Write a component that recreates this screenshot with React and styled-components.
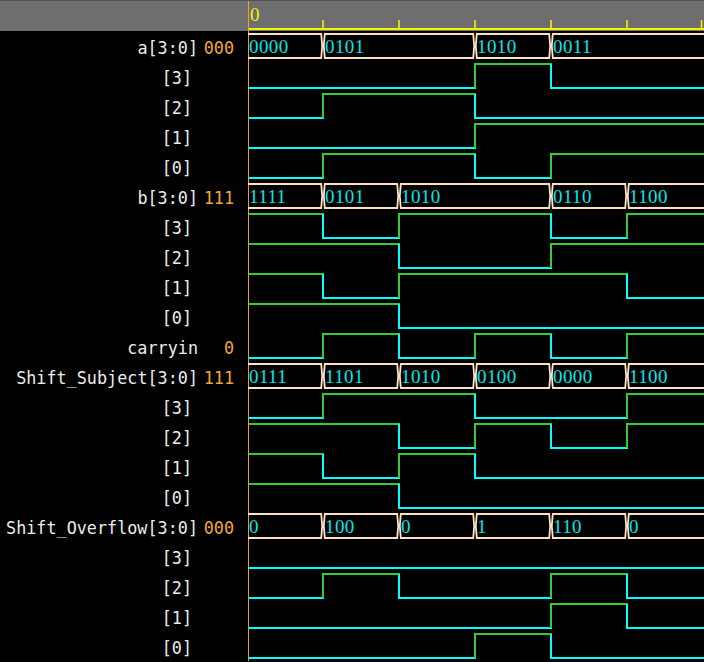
import React from "react";
import styled, { createGlobalStyle } from "styled-components";

const GlobalStyle = createGlobalStyle`
  html, body {
    margin: 0;
    padding: 0;
    background: #000000;
  }
`;

// edge positions, relative to the first pixel after the cursor line
const T = [0, 74, 150, 226, 302, 378, 460];

const HIGH = "#33cc33";
const LOW = "#00ffff";
const BUS = "#ffe2c4";
const TEXT = "#00e8e8";

const signals = [
  { name: "a[3:0]", value: "000", bus: ["0000", "0101", "0101", "1010", "0011", "0011"] },
  { name: "[3]", bits: [0, 0, 0, 1, 0, 0] },
  { name: "[2]", bits: [0, 1, 1, 0, 0, 0] },
  { name: "[1]", bits: [0, 0, 0, 1, 1, 1] },
  { name: "[0]", bits: [0, 1, 1, 0, 1, 1] },
  { name: "b[3:0]", value: "111", bus: ["1111", "0101", "1010", "1010", "0110", "1100"] },
  { name: "[3]", bits: [1, 0, 1, 1, 0, 1] },
  { name: "[2]", bits: [1, 1, 0, 0, 1, 1] },
  { name: "[1]", bits: [1, 0, 1, 1, 1, 0] },
  { name: "[0]", bits: [1, 1, 0, 0, 0, 0] },
  { name: "carryin", value: "0", bits: [0, 1, 0, 1, 0, 1] },
  { name: "Shift_Subject[3:0]", value: "111", bus: ["0111", "1101", "1010", "0100", "0000", "1100"] },
  { name: "[3]", bits: [0, 1, 1, 0, 0, 1] },
  { name: "[2]", bits: [1, 1, 0, 1, 0, 1] },
  { name: "[1]", bits: [1, 0, 1, 0, 0, 0] },
  { name: "[0]", bits: [1, 1, 0, 0, 0, 0] },
  { name: "Shift_Overflow[3:0]", value: "000", bus: ["0", "100", "0", "1", "110", "0"] },
  { name: "[3]", bits: [0, 0, 0, 0, 0, 0] },
  { name: "[2]", bits: [0, 1, 0, 0, 1, 0] },
  { name: "[1]", bits: [0, 0, 0, 0, 1, 0] },
  { name: "[0]", bits: [0, 0, 0, 1, 0, 0] },
];

const Viewer = styled.div`
  width: 704px;
  height: 662px;
  overflow: hidden;
  background: #000000;
`;

const Header = styled.div`
  display: grid;
  grid-template-columns: 248px 1fr;
  height: 30px;
  background: #6e6e6e;
  border-top: 1px solid #505050;
`;

const Ruler = styled.div`
  position: relative;
  border-left: 1px solid #e8a030;
`;

const RulerLabel = styled.span`
  position: absolute;
  left: 1px;
  top: 4px;
  font-family: "Liberation Serif", serif;
  font-size: 19px;
  line-height: 19px;
  color: #f4f400;
`;

const Row = styled.div`
  display: grid;
  grid-template-columns: 198px 36px 14px 1fr;
  height: 30px;
  align-items: center;
  font-family: "DejaVu Sans Mono", monospace;
  font-size: 16.8px;
`;

const Name = styled.div`
  padding-top: 3px;
  text-align: right;
  white-space: nowrap;
  color: #ececec;
  padding-right: ${(p) => (p.$bit ? "6px" : "0")};
`;

const Value = styled.div`
  padding-top: 3px;
  text-align: right;
  color: #f0a830;
`;

const WaveCell = styled.div`
  align-self: stretch;
  border-left: 1px solid #e8a030;
`;

const WaveSvg = styled.svg`
  display: block;
  overflow: visible;
`;

const BusText = styled.text`
  font-family: "Liberation Serif", serif;
  font-size: 19px;
  letter-spacing: 0.4px;
  fill: ${TEXT};
`;

function BitWave({ bits }) {
  const y = (v) => (v ? 3 : 27);
  const col = (v) => (v ? HIGH : LOW);
  const parts = [];
  bits.forEach((v, i) => {
    if (i > 0 && bits[i - 1] !== v) {
      parts.push(
        <line key={"e" + i} x1={T[i]} x2={T[i]} y1={y(bits[i - 1])} y2={y(v)} stroke={col(v)} strokeWidth="2" />
      );
    }
    parts.push(
      <line key={"h" + i} x1={T[i] - (i > 0 ? 1 : 0)} x2={T[i + 1] + 1} y1={y(v)} y2={y(v)} stroke={col(v)} strokeWidth="2" />
    );
  });
  return parts;
}

function BusWave({ bus }) {
  const segs = [];
  bus.forEach((v, i) => {
    const last = segs[segs.length - 1];
    if (last && last.v === v) last.x1 = T[i + 1];
    else segs.push({ v, x0: T[i], x1: T[i + 1] });
  });
  const top = 3;
  const bot = 27;
  const mid = 15;
  return segs.map((s, i) => {
    const first = i === 0;
    const lastSeg = i === segs.length - 1;
    const l = first ? `M ${s.x0 - 1} ${top}` : `M ${s.x0 + 0.8} ${mid} L ${s.x0 + 1.8} ${top}`;
    const r = lastSeg
      ? `L ${s.x1} ${top} M ${s.x1} ${bot}`
      : `L ${s.x1 - 1.8} ${top} L ${s.x1 - 0.8} ${mid} L ${s.x1 - 1.8} ${bot}`;
    const e = first ? `L ${s.x0 - 1} ${bot}` : `L ${s.x0 + 1.8} ${bot} L ${s.x0 + 0.8} ${mid}`;
    return (
      <g key={i}>
        <path d={`${l} ${r} ${e}`} fill="none" stroke={BUS} strokeWidth="1.8" />
        <BusText x={first ? 0 : s.x0 + 2} y="21.5">
          {s.v}
        </BusText>
      </g>
    );
  });
}

function Ticks() {
  return (
    <WaveSvg width="455" height="30">
      <line x1="0" x2="460" y1="28" y2="28" stroke="#f4f400" strokeWidth="2" />
      {T.slice(1, 6).map((x) => (
        <line key={x} x1={x} x2={x} y1="19" y2="28" stroke="#f4f400" strokeWidth="1.6" />
      ))}
      <line x1="452.5" x2="452.5" y1="19" y2="28" stroke="#f4f400" strokeWidth="1.6" />
    </WaveSvg>
  );
}

export default function App() {
  return (
    <Viewer>
      <GlobalStyle />
      <Header>
        <div />
        <Ruler>
          <Ticks />
          <RulerLabel>0</RulerLabel>
        </Ruler>
      </Header>
      {signals.map((s, i) => (
        <Row key={i}>
          <Name $bit={!s.value && !s.bus}>{s.name}</Name>
          <Value>{s.value}</Value>
          <div />
          <WaveCell>
            <WaveSvg width="455" height="30">
              {s.bus ? <BusWave bus={s.bus} /> : <BitWave bits={s.bits} />}
            </WaveSvg>
          </WaveCell>
        </Row>
      ))}
    </Viewer>
  );
}
